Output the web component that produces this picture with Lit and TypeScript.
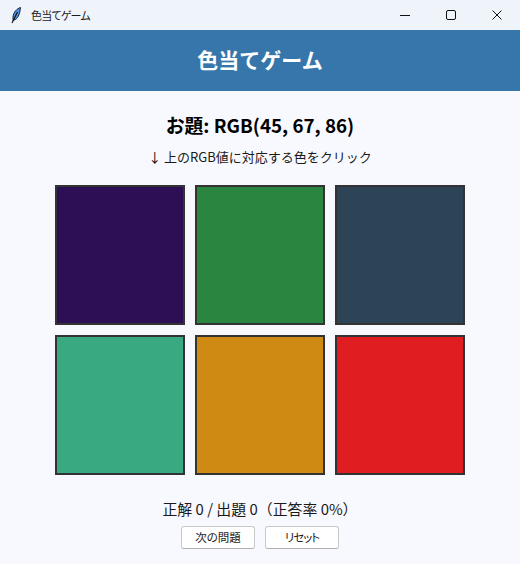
import { LitElement, html, css } from "lit";
import { customElement } from "lit/decorators.js";

const swatches = ["#2d0f55", "#2a8540", "#2d4356", "#38a981", "#ce8a12", "#e01e22"];

@customElement("app-root")
export class AppRoot extends LitElement {
  static styles = css`
    :host {
      display: flex;
      flex-direction: column;
      width: 520px;
      height: 564px;
      overflow: hidden;
      background: #f8f9ff;
      font-family: "Noto Sans CJK JP", "Noto Sans", sans-serif;
      color: #111;
    }
    .titlebar {
      height: 30px;
      flex: none;
      background: #eff4fb;
      display: flex;
      align-items: center;
    }
    .feather { margin-left: 9px; width: 14px; height: 18px; }
    .wintitle {
      margin-left: 8px;
      font-size: 11px;
      color: #1a1a1a;
      flex: 1;
      font-feature-settings: "palt";
      letter-spacing: -0.8px;
    }
    .ctl { width: 46px; height: 30px; display: flex; align-items: center; justify-content: center; }
    .ctl svg { width: 12px; height: 12px; }
    .header {
      height: 61px;
      flex: none;
      background: #3776ab;
      color: #fff;
      font-size: 21px;
      font-weight: 700;
      line-height: 58px;
      text-align: center;
    }
    .body {
      flex: 1;
      display: flex;
      flex-direction: column;
      align-items: center;
    }
    .q { margin-top: 20px; font-size: 18.800px; font-weight: 700; line-height: 28px; color: #000; }
    .hint { margin-top: 8px; font-size: 13px; line-height: 20px; color: #1a1a1a; }
    .arrow { color: #000; }
    .grid {
      margin-top: 18px;
      display: grid;
      grid-template-columns: repeat(3, 130px);
      grid-auto-rows: 140px;
      gap: 10px;
    }
    .sw { box-sizing: border-box; border: 2px solid #333; }
    .score { margin-top: 23px; font-size: 14.900px; line-height: 22px; color: #1a1a1a; }
    .btns { margin-top: 6px; display: flex; gap: 10px; }
    button {
      box-sizing: border-box;
      width: 74px;
      height: 23px;
      padding: 0;
      font: inherit;
      font-size: 11.500px;
      line-height: 1;
      font-feature-settings: "palt";
      color: #1a1a1a;
      background: #fff;
      border: 1px solid #c9c9c9;
      border-bottom-color: #b0b0b0;
      border-radius: 3px;
    }
    button.tight { letter-spacing: -1px; }
  `;

  render() {
    return html`
      <div class="titlebar">
        <svg class="feather" viewBox="0 0 14 18">
          <path d="M11.500 1.500C8 2.500 4.500 6 4 11L4 14.500L6.500 13.500C9.500 11.500 11 7 11.500 1.500Z" fill="#4f8fe0" stroke="#15233c" stroke-width="1"/>
          <path d="M8.500 6L3 17" stroke="#111" stroke-width="1.100" fill="none"/>
        </svg>
        <span class="wintitle">色当てゲーム</span>
        <div class="ctl"><svg viewBox="0 0 12 12"><path d="M1 6.500H11" stroke="#111" stroke-width="1"/></svg></div>
        <div class="ctl"><svg viewBox="0 0 12 12"><rect x="1.500" y="1.500" width="9" height="9" rx="1.500" fill="none" stroke="#111" stroke-width="1"/></svg></div>
        <div class="ctl"><svg viewBox="0 0 12 12"><path d="M1.500 1.500L10.500 10.500M10.500 1.500L1.500 10.500" stroke="#111" stroke-width="1"/></svg></div>
      </div>
      <div class="header">色当てゲーム</div>
      <div class="body">
        <div class="q">お題: RGB(45, 67, 86)</div>
        <div class="hint"><span class="arrow">↓</span> 上のRGB値に対応する色をクリック</div>
        <div class="grid">
          ${swatches.map((c) => html`<div class="sw" style="background:${c}"></div>`)}
        </div>
        <div class="score">正解 0 / 出題 0（正答率 0%）</div>
        <div class="btns">
          <button>次の問題</button>
          <button class="tight">リセット</button>
        </div>
      </div>
    `;
  }
}
